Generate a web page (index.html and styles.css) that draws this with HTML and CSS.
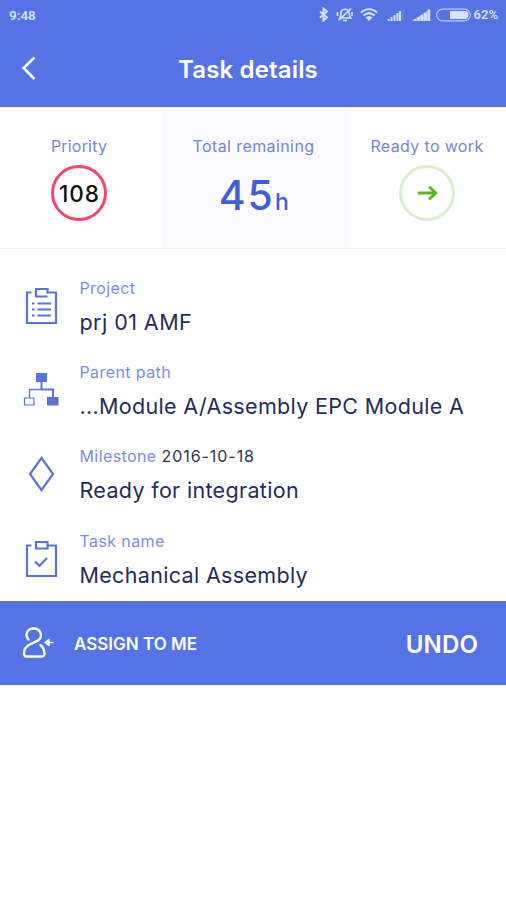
FILE: index.html
```html
<!DOCTYPE html>
<html lang="en">
<head>
<meta charset="utf-8">
<title>Task details</title>
<link rel="stylesheet" href="styles.css">
</head>
<body>
<header class="top">
  <div class="status">
    <span class="clock">9:48</span>
    <svg class="status-icons" width="156" height="18" viewBox="316 6 156 18" fill="none" stroke="currentColor">
      <path d="M319 11.500l7 6-3.500 3V8.500l3.500 3-7 6" stroke-width="1.900"/>
      <path d="M339 18c1-2 1-3 1-5 0-5 8-5 8 0 0 2 0 3 1.500 5zM342 20.500h4M337.500 20.500L350 8.500M336.500 12v4M351 12v4" stroke-width="1.700"/>
      <path d="M360 12.500c5-4.500 11-4.500 16 0M362.500 15.500c3.500-3 7.500-3 11 0" stroke-width="2"/>
      <path d="M364.500 17.500q3.500-2.500 7 0L368 21z" fill="currentColor" stroke="none"/>
      <path d="M387.500 21v-2M390.500 21v-4M393.500 21v-6M396.500 21v-8M399 21v-10" stroke-width="2"/>
      <path d="M402 21V9" stroke-width="1" opacity=".3"/>
      <path d="M411 21L429 9v12z" fill="currentColor" stroke="none" opacity=".6"/>
      <path d="M414 21v-2M417.500 21v-4M421 21v-6M424.500 21v-8M428 21V9.500" stroke-width="2.500"/>
      <rect x="435.700" y="9.200" width="33.600" height="11.600" rx="5.800" stroke-width="1.200" opacity=".8"/>
      <path d="M449 11h15q3.500 0 3.500 4t-3.500 4h-15z" fill="currentColor" stroke="none"/>
    </svg>
    <span class="battery">62%</span>
  </div>
  <div class="bar">
    <svg class="back" width="16" height="26" viewBox="0 0 16 26" fill="none" stroke="currentColor" stroke-width="2.500"><path d="M14.500 2.500L3.500 13l11 11"/></svg>
    <h1 class="title">Task details</h1>
  </div>
</header>
<section class="summary">
  <div class="stat">
    <span class="label priority-label">Priority</span>
    <span class="ring ring-red">108</span>
  </div>
  <div class="stat stat-mid">
    <span class="label total-label">Total remaining</span>
    <span class="hours"><span class="num">45</span><span class="unit">h</span></span>
  </div>
  <div class="stat">
    <span class="label ready-label">Ready to work</span>
    <span class="ring ring-green">
      <svg width="22" height="18" viewBox="0 0 22 18" fill="none" stroke="#5db41c" stroke-width="3" stroke-linecap="round" stroke-linejoin="round"><path d="M3 9H19.500M14 3.500L19.800 9 14 14.500"/></svg>
    </span>
  </div>
</section>
<main class="details">
  <div class="row">
    <svg class="icon" width="36" height="40" viewBox="0 0 36 40" fill="none" stroke="currentColor" stroke-width="2.200">
      <path d="M8.500 6.500H4V37h29V6.500H24.500V3H13v7.500h11.500"/>
      <path d="M9 17.500h2.500M14.500 17.500H28M9 23.500h2.500M14.500 23.500H28M9 29.500h2.500M14.500 29.500H28"/>
    </svg>
    <div class="text"><span class="label project">Project</span><span class="value prj">prj 01 AMF</span></div>
  </div>
  <div class="row">
    <svg class="icon" width="36" height="40" viewBox="0 0 36 40" fill="none" stroke="currentColor">
      <path d="M13 3h11v9H13zM24 27h11.500v8.500H24z" fill="currentColor" stroke="none"/>
      <path d="M18.500 12v7.500M18.500 19.500H30V27" stroke-width="2"/><path d="M18.500 19.500H6.500V28" stroke-width="1.300"/>
      <path d="M1.500 28h9.500v7H1.500z" stroke-width="1.200"/>
    </svg>
    <div class="text"><span class="label parent">Parent path</span><span class="value path">...Module A/Assembly EPC Module A</span></div>
  </div>
  <div class="row">
    <svg class="icon" width="36" height="40" viewBox="0 0 36 40" fill="none" stroke="currentColor" stroke-width="2.200"><path d="M18.500 4L30 20l-11.500 16L7 20z"/></svg>
    <div class="text"><span class="label milestone">Milestone <span class="date">2016-10-18</span></span><span class="value ready">Ready for integration</span></div>
  </div>
  <div class="row">
    <svg class="icon" width="36" height="40" viewBox="0 0 36 40" fill="none" stroke="currentColor" stroke-width="2.200">
      <path d="M8.500 6.500H4V37h29V6.500H24.500V3H13v6.500h11.500V6.500"/>
      <path d="M12 22.500l4.500 4.500 7.500-8"/>
    </svg>
    <div class="text"><span class="label task">Task name</span><span class="value mech">Mechanical Assembly</span></div>
  </div>
</main>
<footer class="actions">
  <svg class="person" width="34" height="34" viewBox="0 0 34 34" fill="none" stroke="currentColor" stroke-width="2.300" stroke-linecap="round" stroke-linejoin="round">
    <path d="M7.500 13.500C3 8 7 2.500 12.500 2.500c8 0 9.500 8.500 4.500 12-4 3-14 3.500-14 13 0 2.500.5 3 2.500 3H20.500c2 0 3-.5 3-3-.2-4-1.500-6.500-4-8.500"/>
    <path d="M26 16.500h6M28 13.500l-4 3 4 3z" stroke-width="1.500" fill="currentColor"/>
  </svg>
  <span class="assign">ASSIGN TO ME</span>
  <span class="undo">UNDO</span>
</footer>
</body>
</html>
```

FILE: styles.css
```css
* { box-sizing: border-box; }
body { margin: 0; background: #fff; font-family: Inter, "Liberation Sans", sans-serif; white-space: nowrap; }
.top { height: 107px; background: #5573e5; color: #fff; border-bottom: 1px solid #4d69d8; }
.status { height: 30px; display: flex; align-items: center; padding: 0 8px 0 9px; color: #dbe2ff; font: 600 12.500px/16px Roboto, sans-serif; }
.clock { font-size: 13.500px; }
.status-icons { margin-left: auto; margin-right: 1px; }
.battery { font-size: 13px; }
.bar { height: 77px; display: grid; grid-template-columns: 48px 1fr 58px; align-items: center; }
.back { margin-left: 20px; margin-top: -2px; }
.title { margin: 2px 0 0; text-align: center; font-size: 24px; line-height: 30px; font-weight: 600; letter-spacing: 0.150px; }
.summary { height: 142px; display: grid; grid-template-columns: 161px 187px 158px; border-bottom: 1px solid #f0f0f4; }
.stat { display: flex; flex-direction: column; align-items: center; padding-top: 29px; }
.stat:first-child { padding-right: 3px; }
.stat-mid { background: #fafaff; padding-right: 2px; }
.label { font-size: 16px; line-height: 20px; color: #7585d5; letter-spacing: 0.400px; }
.priority-label { letter-spacing: 0.200px; }
.ready-label { letter-spacing: 0.350px; }
.ring { width: 56px; height: 56px; margin-top: 9px; border-radius: 50%; display: flex; align-items: center; justify-content: center; }
.ring-red { border: 3.500px solid #f4476b; color: #111; font-size: 22.500px; font-weight: 500; letter-spacing: 1px; padding-left: 1px; }
.ring-green { border: 3.500px solid #ddedcb; }
.hours { margin-top: 14px; padding-left: 2px; line-height: 50px; color: #405fd7; font-weight: 500; letter-spacing: 1.500px; }
.num { font-size: 41px; letter-spacing: 2px; }
.unit { font-size: 23px; }
.details { height: 352px; padding: 28.500px 0 0 22px; color: #5974d8; }
.row { height: 84.400px; display: flex; }
.icon { margin: 8px 0 0 1px; flex: none; }
.text { display: flex; flex-direction: column; margin-left: 20.500px; }
.value { font-size: 21.500px; line-height: 26px; margin-top: 11.200px; color: #252b5c; letter-spacing: 0.330px; }
.prj { letter-spacing: 0.450px; }
.details .label { color: #7b8ddf; }
.label .date { color: #30334f; letter-spacing: 0.950px; }
.actions { height: 84px; display: flex; align-items: center; padding: 0 28px 0 21px; color: #fff; background: #5573e5; font-weight: 600; border-bottom: 1px solid #4d69d8; }
.assign { margin: 2px 0 0 19px; font-size: 17px; }
.undo { margin: 3px 0 0 auto; font-size: 24px; letter-spacing: 0.150px; }
```
